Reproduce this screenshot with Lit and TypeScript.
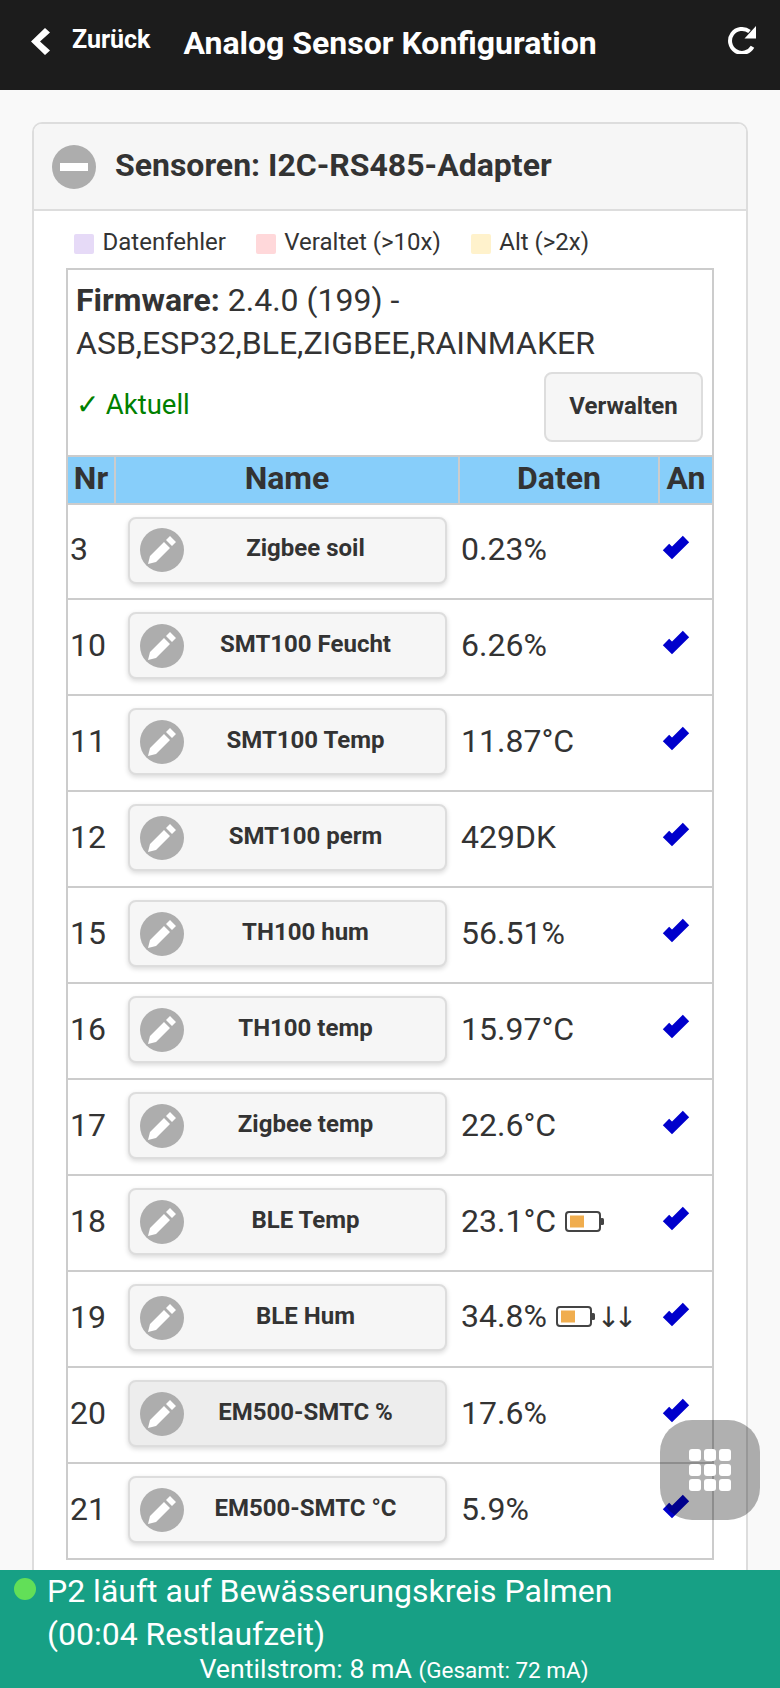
import { LitElement, html, css } from "lit";
import { customElement } from "lit/decorators.js";

const rows = [
  { nr: 3, name: "Zigbee soil", data: "0.23%" },
  { nr: 10, name: "SMT100 Feucht", data: "6.26%" },
  { nr: 11, name: "SMT100 Temp", data: "11.87°C" },
  { nr: 12, name: "SMT100 perm", data: "429DK" },
  { nr: 15, name: "TH100 hum", data: "56.51%" },
  { nr: 16, name: "TH100 temp", data: "15.97°C" },
  { nr: 17, name: "Zigbee temp", data: "22.6°C" },
  { nr: 18, name: "BLE Temp", data: "23.1°C", battery: true },
  { nr: 19, name: "BLE Hum", data: "34.8%", battery: true, arrows: true },
  { nr: 20, name: "EM500-SMTC %", data: "17.6%", hover: true },
  { nr: 21, name: "EM500-SMTC °C", data: "5.9%" },
];

const pencil = html`<span class="disc"><svg viewBox="0 0 14 14" width="28" height="28"><path fill="#fff" d="M1,10l-1,4l4-1l7-7L8,3L1,10z M11,0L9,2l3,3l2-2L11,0z"/></svg></span>`;
const check = html`<svg class="check" viewBox="0 0 28 28" width="28" height="28"><polyline fill="none" stroke="#0000cc" stroke-width="9" points="4,13 10,19 24,5"/></svg>`;
const battery = html`<svg class="battery" viewBox="0 0 40 22" width="40" height="22"><rect x="1" y="1" width="34" height="19" rx="3" fill="none" stroke="#444" stroke-width="2"/><rect x="5" y="4.5" width="14" height="12" fill="#f0ad4e"/><rect x="35" y="7" width="4" height="7" rx="1.5" fill="#444"/></svg>`;

@customElement("app-root")
export class AppRoot extends LitElement {
  static styles = css`
    :host {
      display: block;
      position: relative;
      width: 780px;
      height: 1688px;
      overflow: hidden;
      background: #f9f9f9;
      font-family: Roboto, "Liberation Sans", sans-serif;
      font-size: 32px;
      line-height: 43px;
      color: #333;
    }
    .top {
      height: 90px;
      background: #1c1c1c;
      color: #fff;
      display: flex;
      align-items: center;
      box-sizing: border-box;
      padding: 0 24px 4px 31px;
      font-weight: 700;
    }
    .back { display: flex; align-items: center; gap: 22px; font-size: 25px; line-height: 28px; }
    .back svg { margin-bottom: 4px; }
    .back span { margin-bottom: 6px; }
    .title { margin-left: 33px; font-size: 32px; }
    .reload { margin-left: auto; display: flex; margin-bottom: 7px; }
    main { padding: 32px 32px 0; }
    .card { border: 2px solid #ddd; border-radius: 10px; background: #fff; }
    .card-head {
      height: 85px;
      border-bottom: 2px solid #ddd;
      border-radius: 8px 8px 0 0;
      background: #f6f6f6;
      display: flex;
      align-items: center;
      gap: 19px;
      padding-left: 18px;
      font-size: 32px;
      font-weight: 700;
    }
    .card-head span:last-child { margin-bottom: 3px; }
    .disc {
      flex: none;
      width: 44px;
      height: 44px;
      border-radius: 50%;
      background: #adadad;
      display: flex;
      align-items: center;
      justify-content: center;
    }
    .legend {
      display: flex;
      align-items: center;
      height: 20px;
      margin: 23px 0 14px 40px;
      font-size: 24px;
    }
    .legend i { width: 20px; height: 20px; border-radius: 2px; margin-right: 8.5px; }
    .legend span { margin: 0 30px 4px 0; }
    .purple { background: #e6daf7; }
    .pink { background: #ffd8da; }
    .yellow { background: #fff2cc; }
    .box { margin: 0 32px 60px; border: 2px solid #ccc; }
    .fw { padding: 9px 8px 0; }
    .fw b { font-weight: 700; }
    .status {
      display: flex;
      justify-content: space-between;
      align-items: center;
      margin: 7px 1px 13px 0;
      color: #008000;
      font-size: 27.5px;
    }
    .status span:first-child { margin-bottom: 6px; }
    .manage {
      width: 159px;
      height: 70px;
      box-sizing: border-box;
      border: 2px solid #ddd;
      border-radius: 8px;
      background: #f6f6f6;
      color: #333;
      font-size: 24px;
      font-weight: 700;
      display: flex;
      align-items: center;
      justify-content: center;
      padding-bottom: 2px;
    }
    table { width: 644px; table-layout: fixed; border-collapse: separate; border-spacing: 0; }
    th {
      height: 42px;
      padding: 0 0 4px;
      background: #87cefa;
      border-top: 2px solid #ccc;
      border-bottom: 2px solid #ccc;
      border-right: 2px solid #ccc;
      font-size: 32px;
      font-weight: 700;
      text-align: center;
      line-height: 42px;
    }
    th:last-child { border-right: 0; }
    td { padding: 0; height: 94px; border-bottom: 2px solid #ccc; vertical-align: middle; }
    tr:first-child td { height: 93px; }
    tr:last-child td { border-bottom: 0; }
    td.nr, td.data { height: 90px; padding-bottom: 4px; }
    tr:first-child td.nr, tr:first-child td.data { height: 89px; }
    .nr { padding-left: 2px; }
    .name { padding: 0 13px 0 12px; }
    .data { padding-left: 1px; white-space: nowrap; }
    .on { padding-left: 2px; }
    .sensor {
      height: 67px;
      box-sizing: border-box;
      margin-bottom: 3px;
      border: 2px solid #ddd;
      border-radius: 8px;
      background: #f6f6f6;
      box-shadow: 0 2px 5px rgba(0, 0, 0, 0.15);
      display: flex;
      align-items: center;
      padding: 0 20px 0 10px;
      font-size: 24px;
      font-weight: 700;
    }
    .sensor.hover { background: #ededed; }
    .sensor span:last-child { flex: 1; text-align: center; padding-left: 2px; margin-bottom: 3px; }
    .check { filter: blur(0.6px); display: block; margin-bottom: 8px; }
    .battery { vertical-align: -1px; margin-left: 9px; }
    .arrows { font-family: "DejaVu Sans", sans-serif; font-size: 28px; letter-spacing: -6.5px; margin-left: 1px; }
    .foot {
      position: absolute;
      left: 0;
      right: 0;
      top: 1570px;
      height: 118px;
      background: #17a085;
      color: #fff;
      box-sizing: border-box;
      padding: 0 0 0 47px;
    }
    .foot .dot {
      position: absolute;
      left: 14px;
      top: 8px;
      width: 22px;
      height: 22px;
      border-radius: 50%;
      background: #62df58;
    }
    .foot .cur {
      margin: -2px 0 0 -39px;
      text-align: center;
      font-size: 26.7px;
      line-height: 30px;
    }
    .foot small { font-size: 22.5px; }
    .fab {
      position: absolute;
      left: 660px;
      top: 1420px;
      width: 100px;
      height: 100px;
      border-radius: 32px;
      background: rgba(0, 0, 0, 0.31);
      display: grid;
      grid-template-columns: repeat(3, 12px);
      grid-auto-rows: 12px;
      gap: 3px;
      align-content: center;
      justify-content: center;
    }
    .fab i { background: #fff; border-radius: 3px; }
  `;

  render() {
    return html`
      <div class="top">
        <div class="back">
          <svg viewBox="0 0 19 27" width="19" height="27"><polygon fill="#fff" points="19,4.5 14,0 0,13.5 14,27 19,22.5 9,13.5"/></svg>
          <span>Zurück</span>
        </div>
        <div class="title">Analog Sensor Konfiguration</div>
        <div class="reload">
          <svg viewBox="0 0 28 29" width="28" height="29">
            <path fill="none" stroke="#fff" stroke-width="4" d="M24.5 21.8A12 12 0 1 1 21.5 6.5"/>
            <polygon fill="#fff" points="28,1 28,13.5 16.5,13.5"/>
          </svg>
        </div>
      </div>
      <main>
        <div class="card">
          <div class="card-head">
            <span class="disc"><svg viewBox="0 0 14 14" width="28" height="28"><rect y="5" width="14" height="4" fill="#fff"/></svg></span>
            <span>Sensoren: I2C-RS485-Adapter</span>
          </div>
          <div class="legend">
            <i class="purple"></i><span>Datenfehler</span>
            <i class="pink"></i><span>Veraltet (&gt;10x)</span>
            <i class="yellow"></i><span>Alt (&gt;2x)</span>
          </div>
          <div class="box">
            <div class="fw">
              <div><b>Firmware:</b> 2.4.0 (199) -<br />ASB,ESP32,BLE,ZIGBEE,RAINMAKER</div>
              <div class="status"><span>✓ Aktuell</span><span class="manage">Verwalten</span></div>
            </div>
            <table>
              <colgroup><col style="width:48px" /><col style="width:344px" /><col style="width:200px" /><col style="width:52px" /></colgroup>
              <thead><tr><th>Nr</th><th>Name</th><th>Daten</th><th>An</th></tr></thead>
              <tbody>
                ${rows.map(
                  (r) => html`<tr>
                    <td class="nr">${r.nr}</td>
                    <td class="name"><div class="sensor ${r.hover ? "hover" : ""}">${pencil}<span>${r.name}</span></div></td>
                    <td class="data">${r.data}${r.battery ? battery : ""}${r.arrows ? html`<span class="arrows">↓↓</span>` : ""}</td>
                    <td class="on">${check}</td>
                  </tr>`
                )}
              </tbody>
            </table>
          </div>
        </div>
      </main>
      <div class="fab">${Array.from({ length: 9 }, () => html`<i></i>`)}</div>
      <div class="foot">
        <span class="dot"></span>
        <div>P2 läuft auf Bewässerungskreis Palmen<br />(00:04 Restlaufzeit)</div>
        <div class="cur">Ventilstrom: 8 mA <small>(Gesamt: 72 mA)</small></div>
      </div>
    `;
  }
}
